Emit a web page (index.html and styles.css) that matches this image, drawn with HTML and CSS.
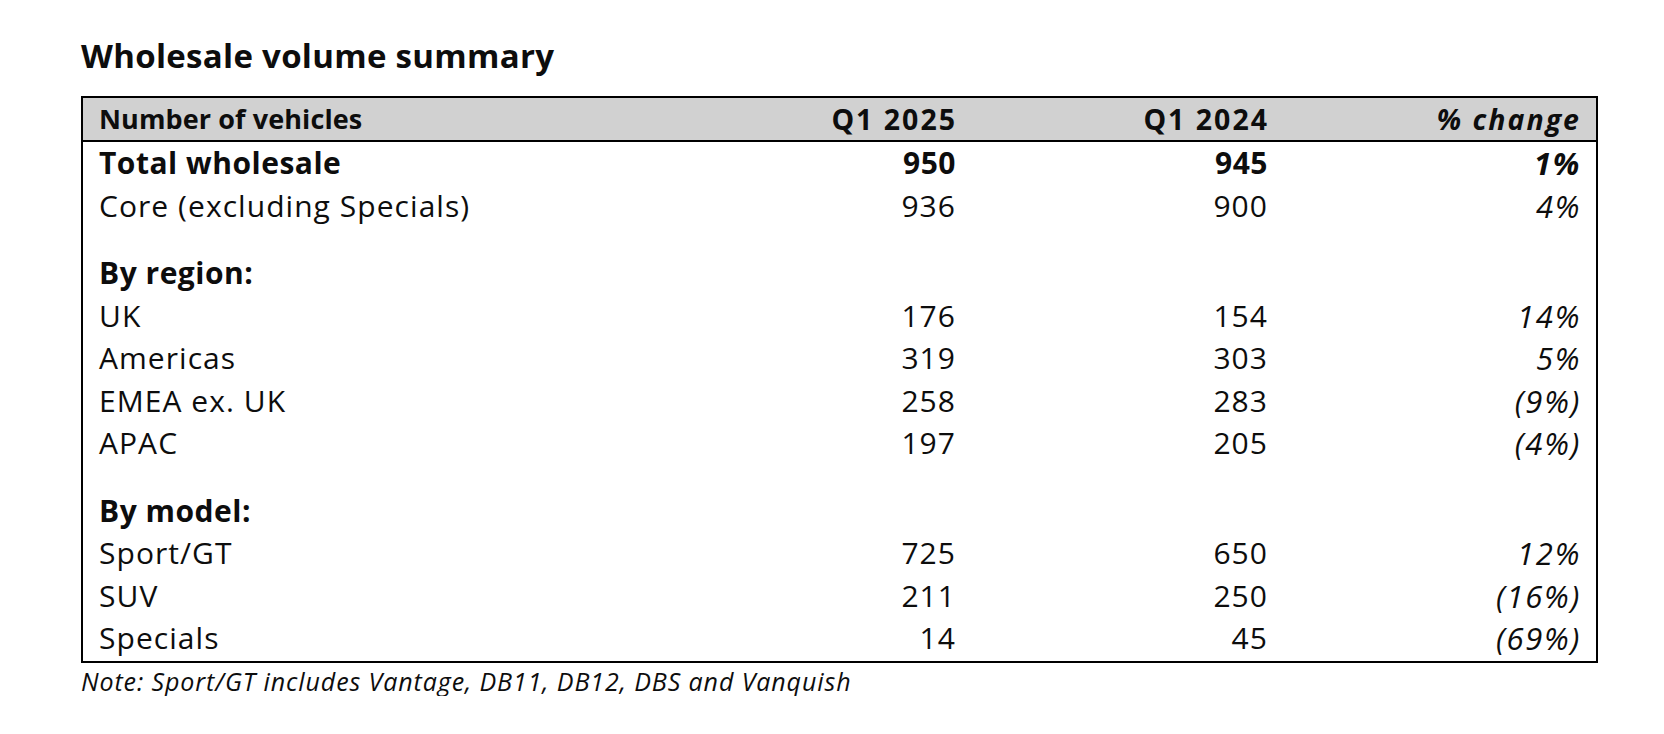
FILE: index.html
```html
<!DOCTYPE html>
<html lang="en">
<head>
<meta charset="utf-8">
<title>Wholesale volume summary</title>
<link rel="stylesheet" href="styles.css">
</head>
<body>
<div class="page">
  <h1 class="title">Wholesale volume summary</h1>
  <table class="summary">
    <colgroup>
      <col class="c-label">
      <col class="c-num">
      <col class="c-num">
      <col class="c-num">
    </colgroup>
    <thead>
      <tr class="head">
        <th class="lbl">Number of vehicles</th>
        <th class="num">Q1 2025</th>
        <th class="num">Q1 2024</th>
        <th class="num pct">% change</th>
      </tr>
    </thead>
    <tbody>
      <tr class="row bold">
        <td class="lbl">Total wholesale</td>
        <td class="num">950</td>
        <td class="num">945</td>
        <td class="num pct">1%</td>
      </tr>
      <tr class="row">
        <td class="lbl">Core (excluding Specials)</td>
        <td class="num">936</td>
        <td class="num">900</td>
        <td class="num pct">4%</td>
      </tr>
      <tr class="spacer"><td colspan="4"></td></tr>
      <tr class="row bold">
        <td class="lbl">By region:</td>
        <td class="num"></td>
        <td class="num"></td>
        <td class="num pct"></td>
      </tr>
      <tr class="row">
        <td class="lbl">UK</td>
        <td class="num">176</td>
        <td class="num">154</td>
        <td class="num pct">14%</td>
      </tr>
      <tr class="row">
        <td class="lbl">Americas</td>
        <td class="num">319</td>
        <td class="num">303</td>
        <td class="num pct">5%</td>
      </tr>
      <tr class="row">
        <td class="lbl">EMEA ex. UK</td>
        <td class="num">258</td>
        <td class="num">283</td>
        <td class="num pct">(9%)</td>
      </tr>
      <tr class="row">
        <td class="lbl">APAC</td>
        <td class="num">197</td>
        <td class="num">205</td>
        <td class="num pct">(4%)</td>
      </tr>
      <tr class="spacer"><td colspan="4"></td></tr>
      <tr class="row bold">
        <td class="lbl">By model:</td>
        <td class="num"></td>
        <td class="num"></td>
        <td class="num pct"></td>
      </tr>
      <tr class="row">
        <td class="lbl">Sport/GT</td>
        <td class="num">725</td>
        <td class="num">650</td>
        <td class="num pct">12%</td>
      </tr>
      <tr class="row">
        <td class="lbl">SUV</td>
        <td class="num">211</td>
        <td class="num">250</td>
        <td class="num pct">(16%)</td>
      </tr>
      <tr class="row last">
        <td class="lbl">Specials</td>
        <td class="num">14</td>
        <td class="num">45</td>
        <td class="num pct">(69%)</td>
      </tr>
    </tbody>
  </table>
  <p class="note">Note: Sport/GT includes Vantage, DB11, DB12, DBS and Vanquish</p>
</div>
</body>
</html>
```

FILE: styles.css
```css
html, body {
  margin: 0;
  padding: 0;
  background: #ffffff;
}

body {
  font-family: "Open Sans", Lato, "DejaVu Sans", sans-serif;
  color: #0d0d0d;
}

.page {
  padding: 36px 0 0 81px;
}

.title {
  margin: 0 0 20px 0;
  font-size: 33px;
  line-height: 40px;
  font-weight: 700;
  letter-spacing: 0.3px;
}

.summary {
  width: 1517px;
  border: 2px solid #000000;
  border-collapse: separate;
  border-spacing: 0;
  table-layout: fixed;
}

.c-num {
  width: 312px;
}

.head th {
  background: #d1d1d1;
  border-bottom: 2px solid #000000;
  height: 42px;
  padding: 0 17px 0 16px;
  font-size: 27px;
  line-height: 42px;
  font-weight: 700;
  vertical-align: top;
  white-space: nowrap;
  letter-spacing: 0.1px;
}

.head th.num {
  font-size: 28.5px;
  letter-spacing: 2px;
  padding-right: 15px;
}

.lbl {
  text-align: left;
}

.num {
  text-align: right;
}

.pct {
  font-style: italic;
}

.row td {
  height: 42.5px;
  padding: 0 16px 0 16px;
  font-size: 30px;
  line-height: 42.5px;
  font-weight: 400;
  vertical-align: top;
  white-space: nowrap;
  letter-spacing: 1.05px;
}

.row.bold td {
  font-weight: 700;
  letter-spacing: 0.5px;
}

.row td.pct {
  font-size: 31px;
  letter-spacing: 1.7px;
  padding-right: 15px;
}

.row.last td {
  padding-bottom: 1px;
}

.spacer td {
  height: 25px;
  padding: 0;
}

.note {
  margin: 0;
  font-size: 25px;
  line-height: 30px;
  font-style: italic;
  letter-spacing: 0.9px;
  padding-top: 3px;
}
```
